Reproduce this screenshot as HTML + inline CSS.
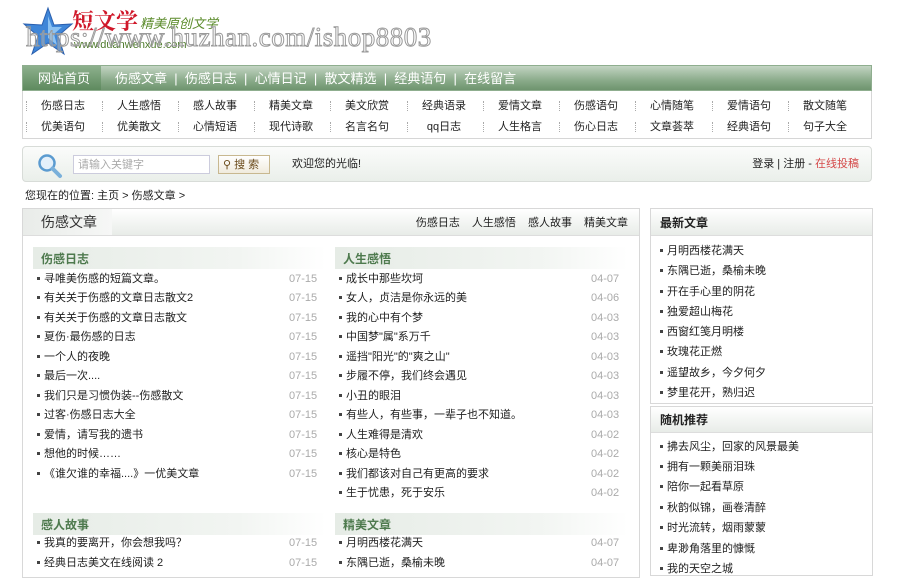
<!DOCTYPE html>
<html><head><meta charset="utf-8">
<style>
*{margin:0;padding:0;box-sizing:border-box}
body{width:900px;height:570px;overflow:hidden;background:#fff;font-family:"Liberation Sans","Noto Sans CJK SC",sans-serif;font-size:12px;line-height:14px;color:#222;position:relative}
.a{position:absolute;white-space:nowrap}
.nav{left:22px;top:65px;width:850px;height:26px;background:linear-gradient(#c3d4c3,#8aab8a 60%,#6e946e);border:1px solid #8fae8f}
.nav span{position:absolute;top:5px;color:#fff;font-size:13px;line-height:15px}
.sub{left:22px;top:91px;width:850px;height:48px;border:1px solid #d6d6d6;border-top:none;background:#fff}
.sub span{position:absolute;width:76px;text-align:center;font-size:11px;color:#222}
.sub i{position:absolute;width:0;height:10px;border-left:1px dotted #aaa}
.search{left:22px;top:146px;width:850px;height:36px;border:1px solid #d8dcd8;border-radius:4px;background:linear-gradient(#fbfcfb,#eaefea)}
.box{border:1px solid #d8d8d8}
.hd{background:linear-gradient(#fff,#e8ece8)}
.sec{position:absolute;height:22px;background:linear-gradient(90deg,#e6ece6,#f2f5f2 70%,#fff);}
.sec b{position:absolute;left:8px;top:5px;color:#4e7a4e;font-size:12px}
.li{position:absolute;font-size:11px}
.li:before{content:"";display:inline-block;width:3px;height:3px;background:#444;margin:0 4px 2px 0;vertical-align:middle}
.dt{position:absolute;font-size:11px;color:#aaa}
</style></head><body>
<svg class="a" style="left:22px;top:6px" width="52" height="52" viewBox="0 0 52 52"><polygon points="26,2 32,19 50,18 36,30 42,48 26,37 10,48 16,30 2,18 20,19" fill="#3f86d8" stroke="#2a5fae" stroke-width="1"/><polygon points="26,10 30,21 40,21 32,28 35,39 26,32" fill="#8cc2f2"/></svg>
<div class="a" style="left:72px;top:8px;font-size:22px;line-height:26px;font-weight:bold;color:#d0182a;font-family:'Noto Serif CJK SC',serif">短文学</div>
<div class="a" style="left:140px;top:16px;font-size:13px;line-height:16px;color:#5a8b2a;font-style:italic">精美原创文学</div>
<div class="a" style="left:74px;top:38px;font-size:11px;color:#4d7a2a">www.duanwenxue.com</div>
<div class="a" style="left:26px;top:22px;font-size:27px;line-height:30px;font-family:'Liberation Serif',serif;color:rgba(255,255,255,0.2);-webkit-text-stroke:1px #9a9a9a;letter-spacing:0.5px">https://www.huzhan.com/ishop8803</div>
<div class="a nav">
<div style="position:absolute;left:0;top:0;width:78px;height:24px;background:linear-gradient(#8db08d,#5e8a5e)"></div>
<span style="left:15px">网站首页</span>
<span style="left:92px">伤感文章 &nbsp;|&nbsp; 伤感日志 &nbsp;|&nbsp; 心情日记 &nbsp;|&nbsp; 散文精选 &nbsp;|&nbsp; 经典语句 &nbsp;|&nbsp; 在线留言</span>
</div>
<div class="a sub">
<span style="left:2px;top:8px">伤感日志</span><span style="left:78px;top:8px">人生感悟</span><span style="left:154px;top:8px">感人故事</span><span style="left:230px;top:8px">精美文章</span><span style="left:306px;top:8px">美文欣赏</span><span style="left:383px;top:8px">经典语录</span><span style="left:459px;top:8px">爱情文章</span><span style="left:535px;top:8px">伤感语句</span><span style="left:611px;top:8px">心情随笔</span><span style="left:688px;top:8px">爱情语句</span><span style="left:764px;top:8px">散文随笔</span>
<span style="left:2px;top:29px">优美语句</span><span style="left:78px;top:29px">优美散文</span><span style="left:154px;top:29px">心情短语</span><span style="left:230px;top:29px">现代诗歌</span><span style="left:306px;top:29px">名言名句</span><span style="left:383px;top:29px">qq日志</span><span style="left:459px;top:29px">人生格言</span><span style="left:535px;top:29px">伤心日志</span><span style="left:611px;top:29px">文章荟萃</span><span style="left:688px;top:29px">经典语句</span><span style="left:764px;top:29px">句子大全</span>
<i style="left:3px;top:10px"></i><i style="left:79px;top:10px"></i><i style="left:155px;top:10px"></i><i style="left:231px;top:10px"></i><i style="left:307px;top:10px"></i><i style="left:384px;top:10px"></i><i style="left:460px;top:10px"></i><i style="left:536px;top:10px"></i><i style="left:612px;top:10px"></i><i style="left:689px;top:10px"></i><i style="left:765px;top:10px"></i>
<i style="left:3px;top:31px"></i><i style="left:79px;top:31px"></i><i style="left:155px;top:31px"></i><i style="left:231px;top:31px"></i><i style="left:307px;top:31px"></i><i style="left:384px;top:31px"></i><i style="left:460px;top:31px"></i><i style="left:536px;top:31px"></i><i style="left:612px;top:31px"></i><i style="left:689px;top:31px"></i><i style="left:765px;top:31px"></i>
</div>
<div class="a search">
<svg style="position:absolute;left:14px;top:6px" width="26" height="26" viewBox="0 0 26 26"><circle cx="10" cy="10" r="7.5" fill="#e4f0fa" stroke="#5b9bd0" stroke-width="2.5"/><line x1="15.5" y1="15.5" x2="23" y2="23" stroke="#7ab0da" stroke-width="4" stroke-linecap="round"/></svg>
<div style="position:absolute;left:50px;top:8px;width:137px;height:19px;border:1px solid #ccd;background:#fff;color:#aaa;font-size:11px;padding:2px 0 0 4px">请输入关键字</div>
<div style="position:absolute;left:195px;top:8px;width:52px;height:19px;border:1px solid #c8b890;background:linear-gradient(#fff,#f0ebdd);color:#6a4a1a;font-size:11px;padding:2px 0 0 4px">&#9906; 搜 索</div>
<div style="position:absolute;left:269px;top:10px;font-size:11px">欢迎您的光临!</div>
<div style="position:absolute;right:12px;top:10px;font-size:11px">登录 | 注册 - <span style="color:#d54a4a">在线投稿</span></div>
</div>
<div class="a" style="left:25px;top:189px;font-size:11px">您现在的位置: 主页 &gt; 伤感文章 &gt;</div>
<div class="a box" style="left:22px;top:208px;width:618px;height:370px">
<div class="hd" style="height:27px;border-bottom:1px solid #ddd;position:relative">
<div style="position:absolute;left:0;top:0;width:89px;height:26px;background:linear-gradient(90deg,#e9ece9,#f6f7f6)"></div>
<div style="position:absolute;left:18px;top:5px;font-size:14px;line-height:16px;color:#333">伤感文章</div>
<div style="position:absolute;right:11px;top:7px;font-size:11px;word-spacing:9px">伤感日志 人生感悟 感人故事 精美文章</div>
</div>
</div>
<div class="sec" style="left:33px;top:247px;width:293px"><b>伤感日志</b></div>
<div class="sec" style="left:335px;top:247px;width:293px"><b>人生感悟</b></div>
<div class="sec" style="left:33px;top:513px;width:293px"><b>感人故事</b></div>
<div class="sec" style="left:335px;top:513px;width:293px"><b>精美文章</b></div>

<div class="li a" style="left:37px;top:272px">寻唯美伤感的短篇文章。</div><div class="dt" style="left:289px;top:272px">07-15</div>
<div class="li a" style="left:37px;top:291px">有关关于伤感的文章日志散文2</div><div class="dt" style="left:289px;top:291px">07-15</div>
<div class="li a" style="left:37px;top:311px">有关关于伤感的文章日志散文</div><div class="dt" style="left:289px;top:311px">07-15</div>
<div class="li a" style="left:37px;top:330px">夏伤·最伤感的日志</div><div class="dt" style="left:289px;top:330px">07-15</div>
<div class="li a" style="left:37px;top:350px">一个人的夜晚</div><div class="dt" style="left:289px;top:350px">07-15</div>
<div class="li a" style="left:37px;top:369px">最后一次....</div><div class="dt" style="left:289px;top:369px">07-15</div>
<div class="li a" style="left:37px;top:389px">我们只是习惯伪装--伤感散文</div><div class="dt" style="left:289px;top:389px">07-15</div>
<div class="li a" style="left:37px;top:408px">过客·伤感日志大全</div><div class="dt" style="left:289px;top:408px">07-15</div>
<div class="li a" style="left:37px;top:428px">爱情，请写我的遗书</div><div class="dt" style="left:289px;top:428px">07-15</div>
<div class="li a" style="left:37px;top:447px">想他的时候……</div><div class="dt" style="left:289px;top:447px">07-15</div>
<div class="li a" style="left:37px;top:467px">《谁欠谁的幸福....》一优美文章</div><div class="dt" style="left:289px;top:467px">07-15</div>

<div class="li a" style="left:339px;top:272px">成长中那些坎坷</div><div class="dt" style="left:591px;top:272px">04-07</div>
<div class="li a" style="left:339px;top:291px">女人，贞洁是你永远的美</div><div class="dt" style="left:591px;top:291px">04-06</div>
<div class="li a" style="left:339px;top:311px">我的心中有个梦</div><div class="dt" style="left:591px;top:311px">04-03</div>
<div class="li a" style="left:339px;top:330px">中国梦"属"系万千</div><div class="dt" style="left:591px;top:330px">04-03</div>
<div class="li a" style="left:339px;top:350px">遥挡"阳光"的"爽之山"</div><div class="dt" style="left:591px;top:350px">04-03</div>
<div class="li a" style="left:339px;top:369px">步履不停，我们终会遇见</div><div class="dt" style="left:591px;top:369px">04-03</div>
<div class="li a" style="left:339px;top:389px">小丑的眼泪</div><div class="dt" style="left:591px;top:389px">04-03</div>
<div class="li a" style="left:339px;top:408px">有些人，有些事，一辈子也不知道。</div><div class="dt" style="left:591px;top:408px">04-03</div>
<div class="li a" style="left:339px;top:428px">人生难得是清欢</div><div class="dt" style="left:591px;top:428px">04-02</div>
<div class="li a" style="left:339px;top:447px">核心是特色</div><div class="dt" style="left:591px;top:447px">04-02</div>
<div class="li a" style="left:339px;top:467px">我们都该对自己有更高的要求</div><div class="dt" style="left:591px;top:467px">04-02</div>
<div class="li a" style="left:339px;top:486px">生于忧患，死于安乐</div><div class="dt" style="left:591px;top:486px">04-02</div>

<div class="li a" style="left:37px;top:536px">我真的要离开，你会想我吗？</div><div class="dt" style="left:289px;top:536px">07-15</div>
<div class="li a" style="left:37px;top:556px">经典日志美文在线阅读 2</div><div class="dt" style="left:289px;top:556px">07-15</div>
<div class="li a" style="left:339px;top:536px">月明西楼花满天</div><div class="dt" style="left:591px;top:536px">04-07</div>
<div class="li a" style="left:339px;top:556px">东隅已逝，桑榆未晚</div><div class="dt" style="left:591px;top:556px">04-07</div>

<div class="a box" style="left:650px;top:208px;width:223px;height:196px">
<div class="hd" style="height:27px;border-bottom:1px solid #ddd;font-weight:bold;padding:7px 0 0 9px">最新文章</div></div>
<div class="a box" style="left:650px;top:406px;width:223px;height:170px">
<div class="hd" style="height:26px;border-bottom:1px solid #ddd;font-weight:bold;padding:6px 0 0 9px">随机推荐</div></div>
<div class="li a" style="left:660px;top:244px">月明西楼花满天</div>
<div class="li a" style="left:660px;top:264px">东隅已逝，桑榆未晚</div>
<div class="li a" style="left:660px;top:285px">开在手心里的阴花</div>
<div class="li a" style="left:660px;top:305px">独爱超山梅花</div>
<div class="li a" style="left:660px;top:325px">西窗红笺月明楼</div>
<div class="li a" style="left:660px;top:345px">玫瑰花正燃</div>
<div class="li a" style="left:660px;top:366px">遥望故乡，今夕何夕</div>
<div class="li a" style="left:660px;top:386px">梦里花开，熟归迟</div>
<div class="li a" style="left:660px;top:440px">拂去风尘，回家的风景最美</div>
<div class="li a" style="left:660px;top:460px">拥有一颗美丽泪珠</div>
<div class="li a" style="left:660px;top:480px">陪你一起看草原</div>
<div class="li a" style="left:660px;top:501px">秋韵似锦，画卷清醉</div>
<div class="li a" style="left:660px;top:521px">时光流转，烟雨蒙蒙</div>
<div class="li a" style="left:660px;top:542px">卑渺角落里的慷慨</div>
<div class="li a" style="left:660px;top:562px">我的天空之城</div>
</body></html>
